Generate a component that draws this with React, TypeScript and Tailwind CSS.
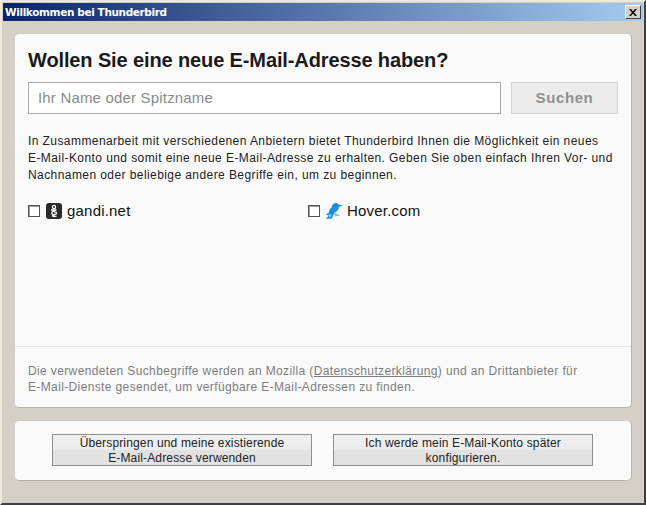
const sans = "font-['Liberation_Sans',Arial,sans-serif]";

const GandiIcon = () => (
  <svg width="16" height="16" viewBox="0 0 16 16" className="shrink-0">
    <rect width="16" height="16" rx="3" fill="#2a2a2a" />
    <circle cx="8" cy="4" r="1.6" fill="none" stroke="#fff" strokeWidth="1.2" />
    <path d="M5 7h5.500M10.500 7C7 8 5 9.500 6 11c1 1.500 4 .5 4.500-.5.4-1-1-1.800-2.500-1.300M6 12.500c1 1 3 1.200 4.500.5" fill="none" stroke="#fff" strokeWidth="1.300" />
  </svg>
);

const HoverIcon = () => (
  <svg width="18" height="18" viewBox="0 0 18 18" className="shrink-0">
    <path d="M6.500 5.500C7 3 8.500 1 11 1c1.200 0 2 .7 2.400 1.600L17.800 3.500 14 4.800C13.600 7.500 12 9.800 9.500 11l-1 1.500-1.500 4-6 .5 2.500-3.500-3-1 3.200-1.500C3.800 8.500 5 6.500 6.500 5.500z" fill="#1f8ce0" />
    <path d="M9 10.500l6.500 3-5.500 1z" fill="#7fc2f0" />
    <path d="M3 13l3-1 .5 2-2 1.500z" fill="#8cc8f0" />
  </svg>
);

const Provider = ({ name, icon, className }: { name: string; icon: React.ReactNode; className: string }) => (
  <div className={`flex items-center ${className}`}>
    <span className="h-3 w-3 shrink-0 border border-[#555] bg-white shadow-[inset_1px_1px_0_#999]" />
    <span className="ml-[5px] flex w-[18px] justify-center">{icon}</span>
    <span className="ml-[4px] text-[15px] leading-[18px] tracking-[0.200px] text-[#111]">{name}</span>
  </div>
);

const ActionButton = ({ line1, line2, className }: { line1: string; line2: string; className: string }) => (
  <button className={`h-8 border border-[#8e8e8e] bg-[linear-gradient(#f0f0f0_0,#ececec_50%,#e1e1e1_50%,#e3e3e3_100%)] pt-px text-center text-xs leading-[15px] tracking-[0.150px] text-[#222] ${className}`}>
    {line1}
    <br />
    {line2}
  </button>
);

export default function App() {
  return (
    <div className={`flex h-[505px] w-[646px] flex-col overflow-hidden border-2 border-t-[#ece9d8] border-l-[#ece9d8] border-b-[#404040] border-r-[#404040] bg-[#d4d0c8] p-px ${sans}`}>
      {/* Title bar */}
      <div className="flex h-[18px] shrink-0 items-center justify-between bg-[linear-gradient(90deg,#0a246a,#a6caf0)] pl-[2px] pr-[2px]">
        <span className="font-['DejaVu_Sans',sans-serif] text-[10.500px] font-bold leading-none tracking-[-0.380px] text-white">Willkommen bei Thunderbird</span>
        <span className="flex h-[14px] w-4 items-center justify-center border border-b-[#404040] border-l-white border-r-[#404040] border-t-white bg-[#d4d0c8]">
          <svg width="8" height="7" viewBox="0 0 8 7">
            <path d="M0 0l2 0 2 2.500L6 0l2 0-3 3.500L8 7 6 7 4 4.500 2 7 0 7l3-3.500z" fill="#000" />
          </svg>
        </span>
      </div>

      <div className="flex flex-1 flex-col px-[11px] pt-3">
        {/* Main panel */}
        <div className="flex h-[375px] flex-col rounded-[5px] border border-[#cfccc5] border-b-[#b5b2ab] border-r-[#b5b2ab] bg-[#fafafa]">
          <div className="flex-1 px-[13px] pt-[14px]">
            <h1 className="text-xl font-bold leading-6 tracking-[-0.120px] text-[#1a1a1a]">Wollen Sie eine neue E-Mail-Adresse haben?</h1>
            <div className="mt-[10px] flex gap-[10px]">
              <div className="flex h-8 w-[473px] items-center border border-[#aaa] bg-white pl-[9px] text-[15px] tracking-[0.180px] text-[#8a8a8a]">Ihr Name oder Spitzname</div>
              <div className="flex h-8 w-[107px] items-center justify-center border border-[#d2d2d2] bg-[#ececec] text-[15px] font-bold tracking-[0.600px] text-[#8f8f8f]">Suchen</div>
            </div>
            <p className="mt-[19px] text-xs leading-[17px] tracking-[0.420px] text-[#222]">
              In Zusammenarbeit mit verschiedenen Anbietern bietet Thunderbird Ihnen die Möglichkeit ein neues
              <br />
              E-Mail-Konto und somit eine neue E-Mail-Adresse zu erhalten. Geben Sie oben einfach Ihren Vor- und
              <br />
              Nachnamen oder beliebige andere Begriffe ein, um zu beginnen.
            </p>
            <div className="mt-[18px] flex">
              <Provider name="gandi.net" icon={<GandiIcon />} className="w-[280px]" />
              <Provider name="Hover.com" icon={<HoverIcon />} className="w-[200px]" />
            </div>
          </div>
          <div className="h-[61px] border-t border-[#e4e4e4] px-[13px] pt-[16px] text-xs leading-4 tracking-[0.370px] text-[#7d7d7d]">
            Die verwendeten Suchbegriffe werden an Mozilla (<span className="underline">Datenschutzerklärung</span>) und an Drittanbieter für
            <br />
            E-Mail-Dienste gesendet, um verfügbare E-Mail-Adressen zu finden.
          </div>
        </div>

        {/* Button panel */}
        <div className="mt-3 flex h-[61px] gap-[21px] rounded-[5px] border border-[#cfccc5] border-b-[#b5b2ab] border-r-[#b5b2ab] bg-[#fafafa] pl-[37px] pt-[13px]">
          <ActionButton line1="Überspringen und meine existierende" line2="E-Mail-Adresse verwenden" className="w-[260px]" />
          <ActionButton line1="Ich werde mein E-Mail-Konto später" line2="konfigurieren." className="w-[260px]" />
        </div>
      </div>
    </div>
  );
}
